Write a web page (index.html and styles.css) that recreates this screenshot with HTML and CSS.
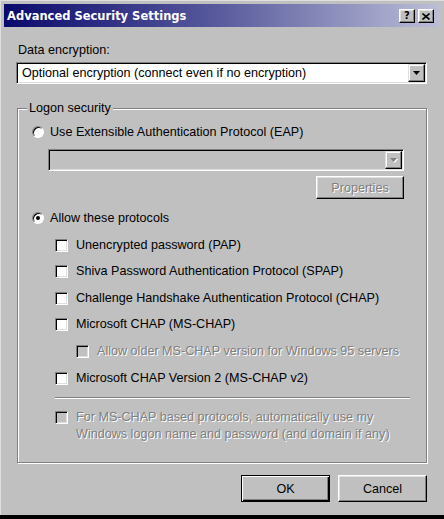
FILE: index.html
```html
<!DOCTYPE html>
<html>
    <head>
        <title>Advanced Security Settings</title>
        <link rel="stylesheet" href="styles.css">
    </head>
    <body>
        <div class="window">
            <div class="titlebar">
                <span class="title">Advanced Security Settings</span>
                <div class="title-buttons">
                    <span class="title-btn">?</span>
                    <span class="title-btn">
                        <svg width="8" height="7" viewBox="0 0 8 7"><path d="M0.5 0.5 L7.5 6.5 M7.5 0.5 L0.5 6.5" stroke="#000" stroke-width="1.6" fill="none"/></svg>
                    </span>
                </div>
            </div>
            <div class="content">
                <div class="field-label">Data encryption:</div>
                <div class="combo">
                    <span class="combo-text">Optional encryption (connect even if no encryption)</span>
                    <span class="combo-btn">
                        <svg width="7" height="4" viewBox="0 0 7 4"><polygon points="0,0 7,0 3.5,4" fill="#000"/></svg>
                    </span>
                </div>

                <div class="group">
                    <span class="group-label">Logon security</span>

                    <div class="opt radio-opt first">
                        <span class="radio"></span>
                        <span>Use Extensible Authentication Protocol (EAP)</span>
                    </div>
                    <div class="combo disabled eap">
                        <span class="combo-text"></span>
                        <span class="combo-btn">
                            <svg width="8" height="5" viewBox="0 0 8 5"><polygon points="1,1 8,1 4.5,5" fill="#fff"/><polygon points="0,0 7,0 3.5,4" fill="#808080"/></svg>
                        </span>
                    </div>
                    <div class="props-row">
                        <button class="btn disabled">Properties</button>
                    </div>

                    <div class="opt radio-opt allow">
                        <span class="radio checked"></span>
                        <span>Allow these protocols</span>
                    </div>
                    <div class="opt check-opt pap">
                        <span class="check"></span>
                        <span>Unencrypted password (PAP)</span>
                    </div>
                    <div class="opt check-opt">
                        <span class="check"></span>
                        <span>Shiva Password Authentication Protocol (SPAP)</span>
                    </div>
                    <div class="opt check-opt odd">
                        <span class="check"></span>
                        <span>Challenge Handshake Authentication Protocol (CHAP)</span>
                    </div>
                    <div class="opt check-opt">
                        <span class="check"></span>
                        <span>Microsoft CHAP (MS-CHAP)</span>
                    </div>
                    <div class="opt check-opt sub odd">
                        <span class="check disabled"></span>
                        <span class="muted">Allow older MS-CHAP version for Windows 95 servers</span>
                    </div>
                    <div class="opt check-opt odd">
                        <span class="check"></span>
                        <span>Microsoft CHAP Version 2 (MS-CHAP v2)</span>
                    </div>

                    <div class="separator"></div>

                    <div class="opt check-opt multi">
                        <span class="check disabled"></span>
                        <span class="muted">For MS-CHAP based protocols, automatically use my<br>Windows logon name and password (and domain if any)</span>
                    </div>
                </div>

                <div class="actions">
                    <button class="btn default">OK</button>
                    <button class="btn">Cancel</button>
                </div>
            </div>
        </div>
    </body>
</html>
```

FILE: styles.css
```css
body {
    margin: 0;
    padding: 0;
    background: #000;
    font-family: "Liberation Sans", Arial, sans-serif;
    font-size: 12.6px;
    line-height: 16px;
    color: #000;
}

.window {
    height: 515px;
    box-sizing: border-box;
    padding: 3px 4px 0 3px;
    background: #c0c0c0;
    border-top: 1px solid #dfdfdf;
    border-left: 1px solid #dfdfdf;
}

.titlebar {
    height: 23px;
    display: flex;
    align-items: center;
    justify-content: space-between;
    padding: 0 6px 0 3px;
    background: linear-gradient(to right, #0a0a6c, #5a5c9e 50%, #bcbed8);
}

.title {
    color: #fff;
    font-family: "DejaVu Sans", sans-serif;
    font-weight: bold;
    font-size: 11.5px;
}

.title-buttons {
    display: flex;
    gap: 3px;
    padding-top: 1px;
}

.title-btn {
    width: 16px;
    height: 14px;
    box-sizing: border-box;
    display: flex;
    align-items: center;
    justify-content: center;
    background: #c0c0c0;
    border: 1px solid;
    border-color: #fff #000 #000 #fff;
    box-shadow: inset -1px -1px #808080, inset 1px 1px #dfdfdf;
    font-family: "DejaVu Sans", sans-serif;
    font-weight: bold;
    font-size: 10px;
    line-height: 10px;
}

.content {
    display: flex;
    flex-direction: column;
    padding: 0 13px 0 12px;
}

.field-label {
    margin-top: 15px;
    padding-left: 2px;
}

/* sunken combobox */
.combo {
    margin-top: 4px;
    height: 22px;
    box-sizing: border-box;
    display: flex;
    align-items: center;
    padding: 1px;
    background: #fff;
    border: 1px solid;
    border-color: #808080 #fff #fff #808080;
    box-shadow: inset 1px 1px #000, inset -1px -1px #dfdfdf;
}

.combo-text {
    flex: 1;
    padding-left: 4px;
    white-space: nowrap;
}

.combo-btn {
    width: 17px;
    height: 18px;
    box-sizing: border-box;
    display: flex;
    align-items: center;
    justify-content: center;
    background: #c0c0c0;
    border: 1px solid;
    border-color: #dfdfdf #000 #000 #dfdfdf;
    box-shadow: inset -1px -1px #808080, inset 1px 1px #fff;
}

.combo.disabled {
    background: #c0c0c0;
}

.combo.eap {
    margin: 8px 22px 0 30px;
}

/* etched group box */
.group {
    position: relative;
    margin: 24px 0 0 1px;
    padding-bottom: 19px;
    border: 1px solid #808080;
    box-shadow: inset 1px 1px #fff, 1px 1px #fff;
}

.group-label {
    position: absolute;
    top: -9px;
    left: 9px;
    padding: 0 2px;
    background: #c0c0c0;
}

.opt {
    display: flex;
    align-items: center;
    height: 18px;
    margin-top: 8px;
    white-space: nowrap;
}

.opt.radio-opt {
    margin-left: 14px;
    gap: 6px;
}

.opt.first {
    margin-top: 14px;
}

.opt.allow {
    margin-top: 10px;
}

.opt.pap,
.opt.odd {
    margin-top: 9px;
}

.opt.check-opt {
    margin-left: 37px;
    gap: 8px;
}

.opt.sub {
    margin-left: 58px;
}

.opt.multi {
    height: auto;
    align-items: flex-start;
    margin-top: 10px;
    line-height: 17px;
}

.opt.multi .check {
    margin-top: 2px;
}

.radio {
    width: 12px;
    height: 12px;
    box-sizing: border-box;
    display: flex;
    align-items: center;
    justify-content: center;
    flex-shrink: 0;
    border-radius: 50%;
    background: #fff;
    border: 1px solid;
    border-color: #808080 #fff #fff #808080;
    box-shadow: inset 1px 1px #000;
}

.radio.checked::after {
    content: '';
    width: 4px;
    height: 4px;
    border-radius: 50%;
    background: #000;
}

.check {
    width: 13px;
    height: 13px;
    box-sizing: border-box;
    flex-shrink: 0;
    background: #fff;
    border: 1px solid;
    border-color: #808080 #fff #fff #808080;
    box-shadow: inset 1px 1px #000, inset -1px -1px #dfdfdf;
}

.check.disabled {
    background: #c0c0c0;
}

.muted {
    color: #808080;
    text-shadow: 1px 1px 0 #fff;
}

.props-row {
    display: flex;
    justify-content: flex-end;
    margin: 5px 22px 0 0;
}

.separator {
    margin: 10px 16px 0 37px;
    border-top: 1px solid #808080;
    border-bottom: 1px solid #fff;
}

/* raised push buttons */
.btn {
    width: 89px;
    height: 27px;
    margin: 0;
    padding: 0;
    font-family: inherit;
    font-size: 12.6px;
    color: #000;
    background: #c0c0c0;
    border: 1px solid;
    border-color: #fff #000 #000 #fff;
    box-shadow: inset -1px -1px #808080, inset 1px 1px #dfdfdf;
    outline: none;
}

.btn.default {
    border-color: #000;
    box-shadow: inset 1px 1px #fff, inset -1px -1px #000, inset -2px -2px #808080;
}

.btn.disabled {
    width: 88px;
    height: 23px;
    color: #808080;
    text-shadow: 1px 1px 0 #fff;
}

.actions {
    display: flex;
    justify-content: flex-end;
    gap: 8px;
    margin-top: 12px;
}
```
